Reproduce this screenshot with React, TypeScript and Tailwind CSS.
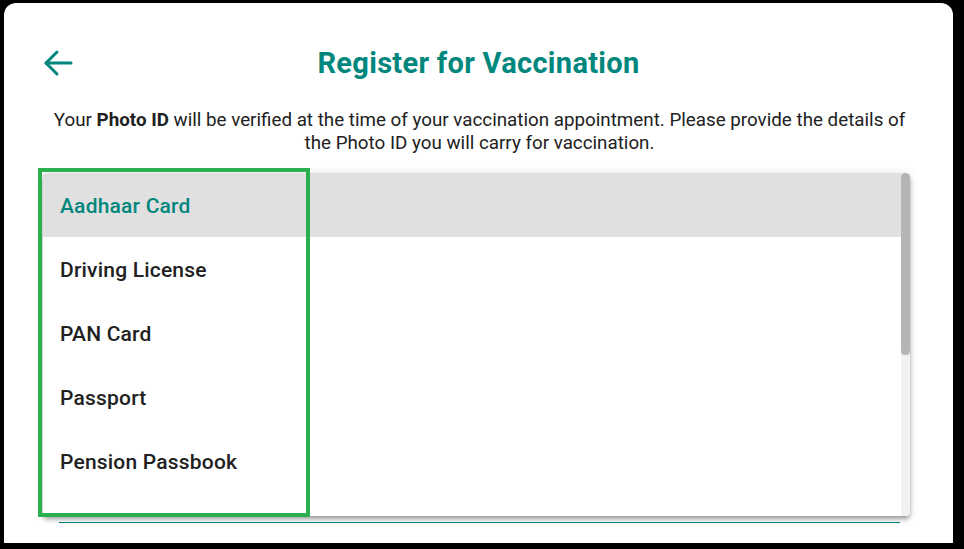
import React from "react";

const idTypes = [
  "Aadhaar Card",
  "Driving License",
  "PAN Card",
  "Passport",
  "Pension Passbook",
];

const BackArrow = () => (
  <svg width="30" height="28" viewBox="0 0 30 28" fill="none" stroke="currentColor" strokeWidth={3} strokeLinecap="round" strokeLinejoin="round">
    <path d="M28 14H3" />
    <path d="M14 3L3 14l11 11" />
  </svg>
);

const App = () => {
  const selected = "Aadhaar Card";

  return (
    <div className="w-[964px] h-[549px] bg-black pt-[3px] pl-[4px] pr-[11px] pb-[6px] font-['Roboto',sans-serif]">
      <div className="h-full bg-white rounded-t-[12px] flex flex-col overflow-hidden pt-[37px]">
        {/* Header */}
        <div className="grid grid-cols-[1fr_auto_1fr] items-center h-[48px] px-[39px]">
          <button className="text-[#00877d] justify-self-start -mt-[2px]">
            <BackArrow />
          </button>
          <h1 className="text-[29px] font-bold text-[#00877d] tracking-[0.3px]">
            Register for Vaccination
          </h1>
          <div />
        </div>

        {/* Info text */}
        <p className="mt-[21px] pl-[47px] pr-[45px] text-center text-[18.8px] leading-[23px] text-[#212121]">
          Your <span className="font-bold">Photo ID</span> will be verified at the time of your vaccination appointment. Please provide the details of the Photo ID you will carry for vaccination.
        </p>

        {/* Dropdown */}
        <div className="relative mt-[18px] ml-[39px] mr-[43px]">
          <div className="flex h-[343px] bg-white overflow-hidden rounded-[4px] shadow-[0_3px_4px_-1px_rgba(0,0,0,0.25),0_4px_5px_0_rgba(0,0,0,0.14),0_1px_10px_0_rgba(0,0,0,0.12)]">
            <ul className="flex-1 flex flex-col">
              {idTypes.map((t) => (
                <li
                  key={t}
                  className={`h-[64px] shrink-0 flex items-center pl-[17px] pt-[3px] text-[21px] font-medium tracking-[0.2px] ${
                    t === selected ? "bg-[#e0e0e0] text-[#00877d]" : "text-[#212121]"
                  }`}
                >
                  {t}
                </li>
              ))}
            </ul>
            {/* scrollbar */}
            <div className="w-[9px] bg-[#f1f1f1] flex flex-col">
              <div className="h-[182px] bg-[#b5b5b5] rounded-[4px]" />
            </div>
          </div>

          {/* highlight box */}
          <div className="absolute -left-[5px] -top-[5px] w-[272px] h-[349px] border-[4px] border-[#2bb04f]" />
        </div>

        {/* Underline of the select field */}
        <div className="mt-[6px] ml-[55px] mr-[53px] h-px bg-[#00877d]" />
      </div>
    </div>
  );
};

export default App;
